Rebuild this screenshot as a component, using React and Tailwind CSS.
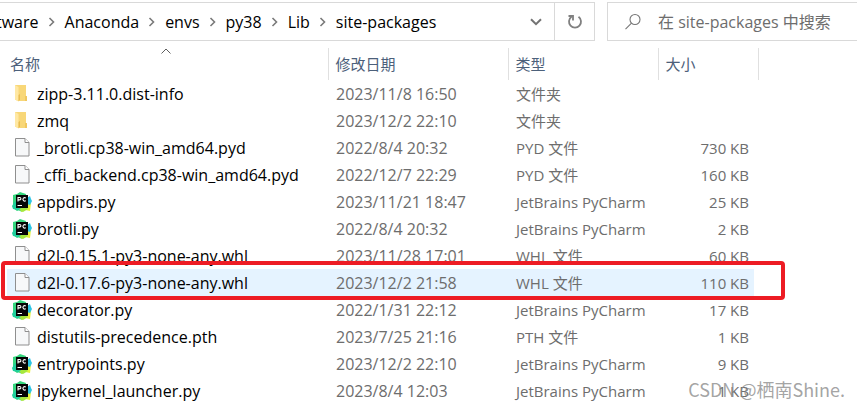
import React from 'react';

const crumbs = ['tware', 'Anaconda', 'envs', 'py38', 'Lib', 'site-packages'];

const files = [
  { name: 'zipp-3.11.0.dist-info', date: '2023/11/8 16:50', type: '文件夹', size: '', icon: 'folder' },
  { name: 'zmq', date: '2023/12/2 22:10', type: '文件夹', size: '', icon: 'folder' },
  { name: '_brotli.cp38-win_amd64.pyd', date: '2022/8/4 20:32', type: 'PYD 文件', size: '730 KB', icon: 'file' },
  { name: '_cffi_backend.cp38-win_amd64.pyd', date: '2022/12/7 22:29', type: 'PYD 文件', size: '160 KB', icon: 'file' },
  { name: 'appdirs.py', date: '2023/11/21 18:47', type: 'JetBrains PyCharm', size: '25 KB', icon: 'pycharm' },
  { name: 'brotli.py', date: '2022/8/4 20:32', type: 'JetBrains PyCharm', size: '2 KB', icon: 'pycharm' },
  { name: 'd2l-0.15.1-py3-none-any.whl', date: '2023/11/28 17:01', type: 'WHL 文件', size: '60 KB', icon: 'file' },
  { name: 'd2l-0.17.6-py3-none-any.whl', date: '2023/12/2 21:58', type: 'WHL 文件', size: '110 KB', icon: 'file', selected: true },
  { name: 'decorator.py', date: '2022/1/31 22:12', type: 'JetBrains PyCharm', size: '17 KB', icon: 'pycharm' },
  { name: 'distutils-precedence.pth', date: '2023/7/25 21:16', type: 'PTH 文件', size: '1 KB', icon: 'file' },
  { name: 'entrypoints.py', date: '2023/12/2 22:10', type: 'JetBrains PyCharm', size: '9 KB', icon: 'pycharm' },
  { name: 'ipykernel_launcher.py', date: '2023/8/4 12:03', type: 'JetBrains PyCharm', size: '1 KB', icon: 'pycharm' },
];

function FolderIcon() {
  return (
    <svg width="20" height="20" viewBox="0 0 20 20" aria-hidden="true">
      <path d="M3 1h11v11h1v5H6l-3-1.500z" fill="#f8d778" />
      <path d="M13 12h2v5h-2z" fill="#f0c75f" />
      <path d="M3 1l3.500 2v14.500L3 15.500z" fill="#ffe8a3" />
      <path d="M6.500 11l1.500-1v5.500l-1.500 2z" fill="#e9bd52" />
    </svg>
  );
}

function FileIcon() {
  return (
    <svg width="20" height="20" viewBox="0 0 20 20" aria-hidden="true">
      <path d="M3.500 .5h9.500l4 4v13.500h-13.500z" fill="#f7f8f9" stroke="#8f8f8f" />
      <path d="M13 .5v4h4" fill="#fff" stroke="#8f8f8f" />
    </svg>
  );
}

function PyCharmIcon() {
  return (
    <svg width="20" height="20" viewBox="0 0 20 20" aria-hidden="true">
      <path d="M1 3l4-1 3-2 6 2-2 14-7 3-4-3z" fill="#35d67d" />
      <path d="M0 14l3-5 8 9-1 2-4-2-5-1z" fill="#1fcf9c" />
      <path d="M9 20l4-2 5 1 1-8-4-5-5 7z" fill="#e6f23c" />
      <path d="M7 18l4 2 5-3-4-4z" fill="#a5e83e" />
      <path d="M15 6l3-2 1 3 1 2-2 4-3-1z" fill="#2cc4e4" />
      <rect x="4" y="3" width="12" height="13" fill="#050505" />
      <path d="M6 9.500V5.500h1.700a1.200 1.200 0 010 2.400H6M13.800 6.100a1.700 1.700 0 100 2.500" fill="none" stroke="#fff" strokeWidth="1.100" />
      <path d="M5.500 13.500h4.500" stroke="#fff" strokeWidth="1" />
    </svg>
  );
}

const icons = {
  folder: <FolderIcon />,
  file: <FileIcon />,
  pycharm: <PyCharmIcon />,
};

function AddressBar() {
  return (
    <div className="flex min-w-0 flex-1 border border-l-0 border-[#d9d9d9]">
      <nav className="flex min-w-0 flex-1 items-center overflow-hidden text-base leading-5">
        <ol className="-ml-1 flex items-center">
          {crumbs.map((crumb, i) => (
            <li key={crumb} className="flex items-center">
              {i > 0 && (
                <svg className="ml-[9px] mr-2.5" width="7" height="10" viewBox="0 0 7 10" aria-hidden="true">
                  <path d="M1.500 1l4 4-4 4" fill="none" stroke="#7a7a7a" strokeWidth="1.600" />
                </svg>
              )}
              <a href="#" className="whitespace-nowrap">{crumb}</a>
            </li>
          ))}
        </ol>
      </nav>
      <button type="button" aria-label="以前的位置" className="flex w-9 items-center justify-center">
        <svg width="12" height="8" viewBox="0 0 12 8" aria-hidden="true">
          <path d="M1 1.200l5 5 5-5" fill="none" stroke="#737373" strokeWidth="2" />
        </svg>
      </button>
      <button type="button" aria-label="刷新" className="flex w-10 items-center justify-center border-l border-[#d9d9d9]">
        <svg width="16" height="16" viewBox="0 0 16 16" aria-hidden="true">
          <path d="M11.500 2.800a6 6 0 11-7 0" fill="none" stroke="#808080" strokeWidth="1.800" />
          <path d="M1.500 2h4.500v4.500" fill="none" stroke="#808080" strokeWidth="1.800" />
        </svg>
      </button>
    </div>
  );
}

function SearchBox() {
  return (
    <label className="flex w-[250px] shrink-0 items-center border border-r-0 border-[#d9d9d9] pl-4">
      <svg className="shrink-0" width="18" height="18" viewBox="0 0 18 18" aria-hidden="true">
        <circle cx="11" cy="6.500" r="5" fill="none" stroke="#757575" strokeWidth="1.100" />
        <path d="M7.500 10.200L1.500 16.200" stroke="#757575" strokeWidth="1.100" />
      </svg>
      <input
        type="text"
        aria-label="搜索"
        placeholder="在 site-packages 中搜索"
        className="ml-4 min-w-0 flex-1 text-base leading-5 outline-none placeholder:text-[#6d6d6d]"
      />
    </label>
  );
}

function FileRow({ file }) {
  const bg = file.selected ? 'bg-[#e5f3ff]' : '';
  return (
    <tr className="h-[27px] text-[#6d6d6d]">
      <td className={`relative p-0 pl-[5px] ${bg}`}>
        <div className="flex items-center gap-[5px] text-base leading-5 text-black">
          {icons[file.icon]}
          <span>{file.name}</span>
        </div>
        {file.selected && (
          <span className="pointer-events-none absolute -left-1.5 -top-2 z-10 h-[39px] w-[784px] rounded-sm border-4 border-[#ed1c24]" />
        )}
      </td>
      <td className={`p-0 pl-2 text-base leading-5 ${bg}`}>{file.date}</td>
      <td className={`p-0 pl-2 ${bg}`}>{file.type}</td>
      <td className={`p-0 pr-[5px] text-right ${bg}`}>{file.size}</td>
      <td className="p-0"></td>
    </tr>
  );
}

export default function App() {
  return (
    <div className="relative min-h-screen overflow-hidden bg-white pt-0.5 font-['Open_Sans','Noto_Sans_CJK_SC',sans-serif] text-[15px] leading-5 text-black">
      <header className="flex h-[39px] gap-3">
        <AddressBar />
        <SearchBox />
      </header>

      <main className="pl-[7px] pt-[7px]">
        <table className="w-[751px] table-fixed border-collapse whitespace-nowrap">
          <colgroup>
            <col className="w-[321px]" />
            <col className="w-[180px]" />
            <col className="w-[150px]" />
            <col className="w-[96px]" />
            <col className="w-[4px]" />
          </colgroup>
          <thead>
            <tr className="h-8 text-left text-[#4c607a]">
              <th className="relative border-r border-[#e0e0e0] p-0 pl-[3px] font-normal">
                名称
                {/* sort direction */}
                <svg className="absolute left-[154px] top-0" width="10" height="6" viewBox="0 0 10 6" aria-hidden="true">
                  <path d="M.5 5.500l4.500-4.500 4.500 4.500" fill="none" stroke="#5f5f5f" />
                </svg>
              </th>
              <th className="border-r border-[#e0e0e0] p-0 pl-[7px] font-normal">修改日期</th>
              <th className="border-r border-[#e0e0e0] p-0 pl-[7px] font-normal">类型</th>
              <th colSpan={2} className="border-r border-[#e0e0e0] p-0 pl-[7px] font-normal">大小</th>
            </tr>
          </thead>
          <tbody>
            {files.map((file) => (
              <FileRow key={file.name} file={file} />
            ))}
          </tbody>
        </table>
      </main>

      <div className="pointer-events-none absolute bottom-1.5 right-3 font-['Noto_Sans_CJK_SC',sans-serif] text-lg leading-6 text-[#8c8c8c]/80">CSDN @栖南Shine.</div>
    </div>
  );
}
